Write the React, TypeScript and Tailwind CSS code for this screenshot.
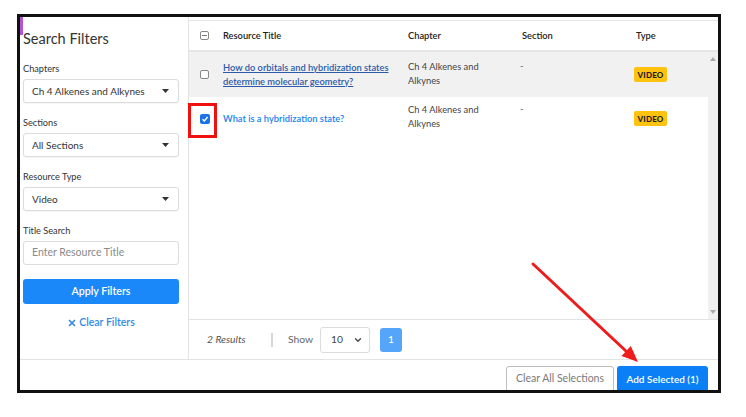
import { ChevronDown, X } from "lucide-react";

const font = { fontFamily: "Lato, 'Noto Sans', sans-serif" };

function Caret() {
    return (
        <svg width="7" height="4" viewBox="0 0 7 4" className="shrink-0">
            <path d="M0 0 L7 0 L3.5 4 Z" fill="#333" />
        </svg>
    );
}

function SelectBox({ value }: { value: string }) {
    return (
        <div className="mt-[3px] flex h-[24px] w-[156px] items-center justify-between whitespace-nowrap rounded-[3px] border border-[#dcdcdc] bg-white pl-[8px] pr-[9px] text-[10px] text-[#333] shadow-[0_1px_1px_rgba(0,0,0,0.04)]">
            <span>{value}</span>
            <Caret />
        </div>
    );
}

function Label({ children }: { children: string }) {
    return <div className="mt-[13px] h-[14px] text-[9.2px] leading-[14px] text-[#333]">{children}</div>;
}

function Badge() {
    return (
        <span className="inline-flex h-[15px] w-[33px] items-center justify-center rounded-[2px] bg-[#ffc20e] text-[8px] font-black tracking-[0.2px] text-[#222]">
            VIDEO
        </span>
    );
}

function EmptyBox() {
    return <span className="block size-[9px] rounded-[2px] border border-[#888] bg-white" />;
}

function CheckedBox() {
    return (
        <span className="flex size-[10px] items-center justify-center rounded-[2px] bg-[#1a73e8]">
            <svg width="8" height="8" viewBox="0 0 8 8">
                <path d="M1.5 4.2 L3.3 6 L6.6 2" stroke="white" strokeWidth="1.4" fill="none" />
            </svg>
        </span>
    );
}

export default function App() {
    return (
        <div className="relative h-[417px] w-[746px] overflow-hidden bg-white" style={font}>
            <div className="absolute left-[17px] top-[14px] flex h-[379px] w-[704px] flex-col overflow-hidden border-[3px] border-[#111]">
                <div className="flex h-[343px] shrink-0 border-b border-[#e3e3e3]">
                    {/* sidebar */}
                    <aside className="relative w-[169px] shrink-0 border-r border-[#e3e3e3] pl-[3px] pt-[12px]">
                        <span className="absolute left-0 top-0 h-[18px] w-[3px] bg-[#b455d6]" />
                        <h2 className="h-[20px] text-[14.5px] leading-[20px] text-[#333]">Search Filters</h2>
                        <div className="mt-[1px]" />
                        <Label>Chapters</Label>
                        <SelectBox value="Ch 4 Alkenes and Alkynes" />
                        <Label>Sections</Label>
                        <SelectBox value="All Sections" />
                        <Label>Resource Type</Label>
                        <SelectBox value="Video" />
                        <Label>Title Search</Label>
                        <div className="mt-[3px] flex h-[24px] w-[156px] items-center rounded-[3px] border border-[#dcdcdc] pl-[8px] text-[10.5px] text-[#8a8a8a]">
                            Enter Resource Title
                        </div>
                        <button className="mt-[14px] flex h-[25px] w-[156px] items-center justify-center rounded-[3px] bg-[#1a88f8] text-[10.6px] font-semibold text-white">
                            Apply Filters
                        </button>
                        <div className="mt-[11px] flex w-[156px] items-center justify-center gap-[2px] text-[10.5px] font-semibold text-[#2f8ae6]">
                            <X size={10} strokeWidth={4} />
                            <span>Clear Filters</span>
                        </div>
                    </aside>

                    {/* table */}
                    <section className="flex flex-1 flex-col pt-[3px]">
                        <div className="grid h-[32px] shrink-0 grid-cols-[34px_185px_112px_114px_1fr] items-center border-b-2 border-t border-[#e6e6e6] text-[9.3px] font-semibold text-[#222]">
                            <span className="pl-[11px]">
                                <span className="flex size-[9px] items-center justify-center rounded-[2px] border border-[#888]">
                                    <span className="h-px w-[5px] bg-[#777]" />
                                </span>
                            </span>
                            <span>Resource Title</span>
                            <span>Chapter</span>
                            <span className="pl-[2px]">Section</span>
                            <span className="pl-[2px]">Type</span>
                        </div>
                        <div className="flex flex-1">
                            <div className="flex-1">
                                <div className="grid h-[45px] grid-cols-[34px_185px_112px_114px_1fr] bg-[#f1f1f1] text-[9.3px] leading-[14px]">
                                    <span className="flex items-center pl-[11px]">
                                        <EmptyBox />
                                    </span>
                                    <span className="flex items-center pr-[10px] font-semibold text-[#2c5aa8] underline">
                                        How do orbitals and hybridization states determine molecular geometry?
                                    </span>
                                    <span className="max-w-[80px] pt-[8px] text-[#444]">Ch 4 Alkenes and Alkynes</span>
                                    <span className="pt-[7px] text-[#666]">-</span>
                                    <span className="flex items-center">
                                        <Badge />
                                    </span>
                                </div>
                                <div className="grid h-[43px] grid-cols-[34px_185px_112px_114px_1fr] text-[9.3px] leading-[14px]">
                                    <span className="flex items-center pl-[11px]">
                                        <CheckedBox />
                                    </span>
                                    <span className="flex items-center font-semibold text-[#1a7ff0]">What is a hybridization state?</span>
                                    <span className="max-w-[80px] pt-[6px] text-[#444]">Ch 4 Alkenes and Alkynes</span>
                                    <span className="pt-[5px] text-[#666]">-</span>
                                    <span className="flex items-center">
                                        <Badge />
                                    </span>
                                </div>
                            </div>
                            <div className="flex w-[10px] flex-col items-center justify-between bg-[#f1f1f1] py-[5px]">
                                <svg width="6" height="4" viewBox="0 0 6 4">
                                    <path d="M0 4 L6 4 L3 0 Z" fill="#aaa" />
                                </svg>
                                <svg width="6" height="4" viewBox="0 0 6 4">
                                    <path d="M0 0 L6 0 L3 4 Z" fill="#aaa" />
                                </svg>
                            </div>
                        </div>
                        <div className="flex h-[40px] shrink-0 items-center border-t border-[#e3e3e3] pl-[18px] text-[10.3px]">
                            <span className="w-[39px] whitespace-nowrap italic text-[#555]">2 Results</span>
                            <span className="ml-[25px] h-[14px] w-[2px] bg-[#d6d6d6]" />
                            <span className="ml-[15px] w-[25px] text-[#666]">Show</span>
                            <div className="ml-[7px] flex h-[26px] w-[50px] items-center justify-between rounded-[3px] border border-[#dcdcdc] pl-[10px] pr-[6px] text-[#444]">
                                <span>10</span>
                                <ChevronDown size={10} strokeWidth={3} />
                            </div>
                            <span className="ml-[10px] flex h-[24px] w-[22px] items-center justify-center rounded-[3px] bg-[#55a6fa] text-white">1</span>
                        </div>
                    </section>
                </div>

                {/* bottom actions */}
                <div className="flex min-h-0 flex-1 items-start justify-end gap-[3px] pr-[10px] pt-[6px]">
                    <button className="h-[26px] w-[108px] shrink-0 rounded-[3px] border border-[#bdbdbd] text-[10.5px] text-[#7a7a7a]">Clear All Selections</button>
                    <button className="h-[26px] w-[91px] shrink-0 rounded-[3px] bg-[#0b7ff5] text-[10px] font-semibold text-white">Add Selected (1)</button>
                </div>
            </div>

            {/* annotations */}
            <div className="absolute left-[188px] top-[103px] h-[35px] w-[29px] border-[3px] border-[#f01010]" />
            <svg className="pointer-events-none absolute left-0 top-0" width="746" height="417">
                <line x1="533" y1="264" x2="627" y2="352" stroke="#ee1c1c" strokeWidth="3" strokeLinecap="round" />
                <polygon points="638,362 621.5,356 630.8,346" fill="#ee1c1c" />
            </svg>
        </div>
    );
}
